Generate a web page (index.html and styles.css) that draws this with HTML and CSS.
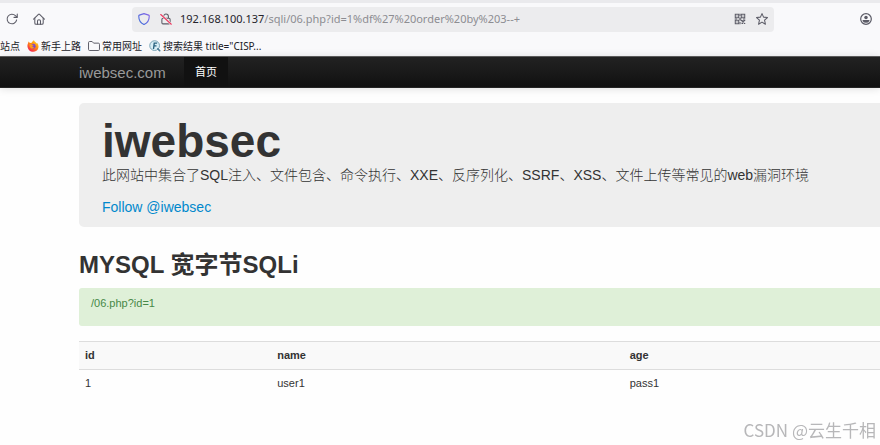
FILE: index.html
```html
<!DOCTYPE html>
<html lang="zh-CN">
<head>
<meta charset="utf-8">
<meta name="viewport" content="width=device-width, initial-scale=1">
<title>iwebsec</title>
<link rel="stylesheet" href="styles.css">
</head>
<body>
<header class="browser">
  <div class="tab-edge"></div>
  <div class="toolbar">
    <div class="nav-buttons">
      <button class="icon-button" type="button" aria-label="重新载入">
        <svg viewBox="0 0 16 16" fill="none" stroke="#5b5b66" stroke-width="1.4" stroke-linecap="round" stroke-linejoin="round"><path d="M14.2 9.2A6.4 6.4 0 1 1 12.6 3.6L14.6 5.6"/><path d="M15 1.4V5.8H10.6"/></svg>
      </button>
      <button class="icon-button" type="button" aria-label="主页">
        <svg viewBox="0 0 16 16" fill="none" stroke="#5b5b66" stroke-width="1.4" stroke-linecap="round" stroke-linejoin="round"><path d="M.8 8.2 7.2 1.8Q8 1.1 8.8 1.8L15.2 8.2"/><path d="M2.4 7V13.2Q2.4 15 4 15H12Q13.6 15 13.6 13.2V7"/><path d="M6 15V10.8Q6 9 8 9T10 10.8V15"/></svg>
      </button>
    </div>
    <div class="address">
      <svg class="icon" viewBox="0 0 16 16" fill="none" stroke-width="1.5" stroke-linejoin="round"><defs><linearGradient id="shield" x1="0" y1="1" x2="1" y2="0"><stop stop-color="#3b70d8"/><stop offset="1" stop-color="#8865e8"/></linearGradient></defs><path stroke="url(#shield)" d="M8 .8 14.2 2.8Q15 3.1 15 4C15 9.6 12.6 13.4 8 15.4 3.4 13.4 1 9.6 1 4Q1 3.1 1.8 2.8Z"/></svg>
      <svg class="icon lock" viewBox="0 0 16 16" fill="none" stroke-width="1.4" stroke-linecap="round"><path stroke="#5b5b66" d="M4.8 7V4.6A3.2 3.2 0 0 1 11.2 4.6V7M12 7Q13.5 7 13.5 8.5V13Q13.5 14.5 12 14.5H4Q2.5 14.5 2.5 13V8.5Q2.5 7 4 7H12"/><path stroke="#ececee" stroke-width="3" d="M1 2 15 15"/><path stroke="#ee3b60" stroke-width="1.5" d="M1 2 15 15"/></svg>
      <div class="url"><span class="host">192.168.100.137</span>/sqli/06.php?id=1%df%27%20order%20by%203--+</div>
      <svg class="icon qr" viewBox="0 0 16 16" fill="none" stroke="#5b5b66" stroke-width="1.4"><path d="M1.7 1.7H6.3V6.3H1.7ZM9.7 1.7H14.3V6.3H9.7ZM1.7 9.7H6.3V14.3H1.7Z"/><path d="M3.3 4H4.7M11.3 4H12.7M3.3 12H4.7M8 1V4M7 8H10M1 8H4M12 8H15M8 6V10M8 12V15M9 10H11V12H13V10H15M10 14H12M13 14H15"/></svg>
      <svg class="icon" viewBox="0 0 16 16" fill="none" stroke="#5b5b66" stroke-width="1.4" stroke-linejoin="round"><path d="M8 .8 10.1 5.5 15.3 6.1 11.4 9.6 12.6 15 8 12.2 3.4 15 4.6 9.6 .7 6.1 5.9 5.5Z"/></svg>
    </div>
    <button class="icon-button account" type="button" aria-label="账户">
      <svg viewBox="0 0 16 16"><circle cx="8" cy="8" r="7.1" fill="none" stroke="#5b5b66" stroke-width="1.6"/><circle cx="8" cy="5.9" r="2.3" fill="#5b5b66"/><path fill="#5b5b66" d="M3.5 9.3H12.5V10.5Q11.2 13 8 13T3.5 10.5Z"/></svg>
    </button>
  </div>
  <nav class="bookmarks" aria-label="书签">
    <a href="#">站点</a>
    <a href="#"><svg viewBox="0 0 16 16"><defs><linearGradient id="fox" x1="1" y1="0" x2=".3" y2="1"><stop stop-color="#ffe03d"/><stop offset=".45" stop-color="#ff980e"/><stop offset="1" stop-color="#f5224f"/></linearGradient></defs><path fill="url(#fox)" d="M9.2.3C10 2.4 12 2.8 12.8 4.5L13.7 4C16.4 7.2 15.7 12 12.6 14.3 9.7 16.4 5.4 16 2.9 13.5.5 11.1-.2 7.2 1.5 4L2.1 2 3.9 4 6.3 3.8C6.7 2.3 7.8 1.3 9.2.3Z"/><circle cx="8.2" cy="8.4" r="3.3" fill="#8049c9"/><path fill="#ff9b17" d="M2.9 5.6Q5.5 4.5 7.2 6.2L9 6.8Q8.4 8 6.7 8.1 7.2 9.8 9.5 9.5 8 12 5.4 10.9 3.2 9.5 2.9 5.6Z"/></svg>新手上路</a>
    <a href="#"><svg viewBox="0 0 16 16" fill="none" stroke="#5b5b66" stroke-width="1.3" stroke-linejoin="round"><path d="M.7 3.5Q.7 2 2.2 2H5.5L7.5 4.2H13.8Q15.3 4.2 15.3 5.7V12.5Q15.3 14 13.8 14H2.2Q.7 14 .7 12.5Z"/></svg>常用网址</a>
    <a href="#"><svg viewBox="0 0 16 16"><circle cx="7.5" cy="7.5" r="6.5" fill="#d9eff6" stroke="#6f9db0" stroke-width="1.2"/><path d="M11.8 11.8 14.3 14.3" stroke="#4b7b94" stroke-width="2.2" stroke-linecap="round"/><path d="M6 12 7 4.2H10.8M6.5 7.8H10" fill="none" stroke="#28627f" stroke-width="1.8"/></svg>搜索结果 title="CISP...</a>
  </nav>
</header>
<nav class="navbar">
  <a class="brand" href="#">iwebsec.com</a>
  <a class="home" href="#">首页</a>
</nav>
<main class="content">
  <section class="hero">
    <h1>iwebsec</h1>
    <p>此网站中集合了<b>SQL</b>注入、文件包含、命令执行、<b>XXE</b>、反序列化、<b>SSRF</b>、<b>XSS</b>、文件上传等常见的<b>web</b>漏洞环境</p>
    <a href="#">Follow @iwebsec</a>
  </section>
  <h2>MYSQL 宽字节SQLi</h2>
  <div class="notice">/06.php?id=1</div>
  <table>
    <colgroup><col class="col-id"><col class="col-name"><col></colgroup>
    <thead><tr><th>id</th><th>name</th><th>age</th></tr></thead>
    <tbody><tr><td>1</td><td>user1</td><td>pass1</td></tr></tbody>
  </table>
</main>
<div class="watermark">CSDN @云生千相</div>
</body>
</html>
```
FILE: styles.css
```css
* { box-sizing: border-box; }
body {
  margin: 0;
  background: #fefefe;
  color: #333;
  font: 11px/16px "Liberation Sans", "Noto Sans CJK SC", sans-serif;
  overflow-x: hidden;
}
a { text-decoration: none; }
svg { display: block; flex: none; }

.browser {
  background: #f9f9fb;
  font-family: "Noto Sans", "Noto Sans CJK SC", sans-serif;
}
.tab-edge { height: 3px; background: #eaeaed; }
.toolbar {
  display: flex;
  align-items: center;
  height: 32px;
  padding: 0 8px 0 6px;
}
.nav-buttons { display: flex; gap: 15px; width: 126px; }
.icon-button {
  width: 12px;
  height: 12px;
  padding: 0;
  border: 0;
  background: none;
}
.nav-buttons svg, .account svg { width: 12px; height: 12px; }
.address {
  display: flex;
  align-items: center;
  flex: 1;
  height: 25px;
  padding: 0 6px;
  border-radius: 4px;
  background: #ececee;
}
.icon { width: 12px; height: 12px; }
.lock { margin: 0 8px 0 10px; }
.qr { margin-right: 10px; }
.url { flex: 1; color: #8d8d92; white-space: nowrap; }
.host { color: #25242b; }
.account { margin-left: 86px; }
.bookmarks {
  display: flex;
  align-items: center;
  gap: 7px;
  height: 21px;
  font-size: 10px;
}
.bookmarks a {
  display: flex;
  align-items: center;
  gap: 2px;
  color: #202027;
  white-space: nowrap;
}
.bookmarks svg { width: 12px; height: 12px; }

.navbar {
  display: flex;
  height: 32px;
  padding-left: 79px;
  border-top: 1px solid #5b5b5b;
  border-bottom: 1px solid #252525;
  background: linear-gradient(#222, #111);
  box-shadow: 0 1px 8px rgba(0, 0, 0, .12);
}
.brand {
  width: 105px;
  color: #999;
  font-size: 15px;
  line-height: 32px;
}
.home {
  padding: 0 11px;
  background: #111;
  color: #fff;
  line-height: 30px;
}

.content { padding: 15px 0 0 79px; }
.hero {
  height: 124px;
  padding: 14px 23px;
  border-radius: 5px 0 0 5px;
  background: #eee;
  font-size: 14px;
  line-height: 20px;
}
.hero h1 {
  margin: 0;
  font-size: 46px;
  line-height: 48px;
}
.hero p { margin: 0 0 12px; font-weight: 300; white-space: nowrap; }
.hero b { font-weight: 400; }
.hero a { color: #08c; }
h2 {
  margin: 22px 0 7px;
  font-size: 24px;
  line-height: 32px;
}
.notice {
  height: 38px;
  padding: 7px 12px;
  border-radius: 3px 0 0 3px;
  background: #dff0d8;
  color: #468847;
}
table {
  width: 100%;
  margin-top: 15px;
  border-collapse: collapse;
  table-layout: fixed;
}
.col-id { width: 24%; }
.col-name { width: 44%; }
th, td {
  padding: 5px 6px 6px;
  border-top: 1px solid #ddd;
  text-align: left;
}
th { background: #f9f9f9; }

.watermark {
  position: fixed;
  right: 4px;
  bottom: 5px;
  color: #b7b7b9;
  font: 17px/20px "Noto Sans CJK SC", sans-serif;
}
```
